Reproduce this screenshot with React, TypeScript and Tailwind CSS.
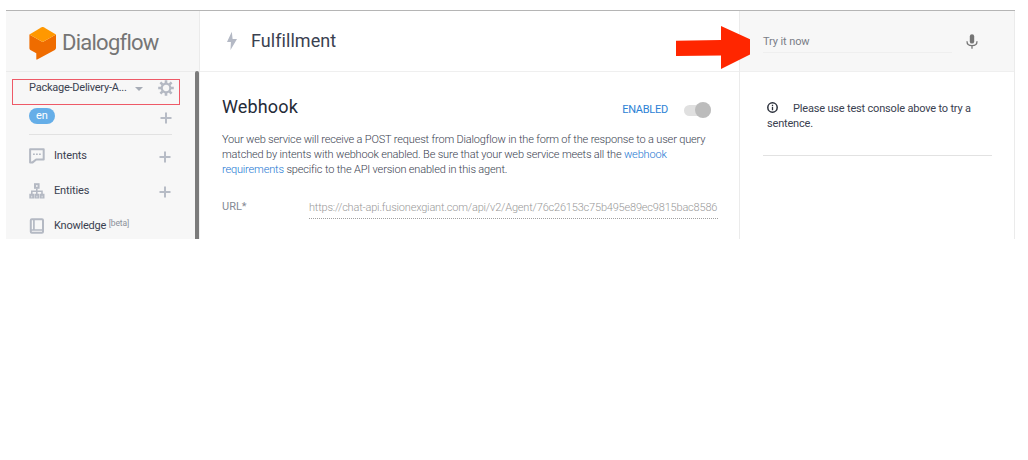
import type { ReactNode } from "react";

function Logo() {
  return (
    <svg width="28" height="36" viewBox="0 0 28 36" className="relative left-px top-px shrink-0">
      <path d="M0.4 8.4V22.2c0 .8.4 1.3 1 1.7l5.9 3.3v5.9c0 .6.4.8.9.5L25.8 23.900c.8-.5 1.200-1 1.200-1.800V8.400L13.700 15.900z" fill="#ef6c00" />
      <path d="M0.400 8.400 12.600 1.300c.7-.4 1.400-.4 2.100 0L27 8.400l-13.300 7.600z" fill="#ff9800" />
    </svg>
  );
}

function Gear() {
  return (
    <svg width="16" height="16" viewBox="0 0 16 16" className="shrink-0" fill="none" stroke="#b4b9c3">
      <circle cx="8" cy="8" r="4.3" strokeWidth="2.2" />
      <path d="M8 .2v3M8 12.8v3M.2 8h3M12.800 8h3M2.400 2.400l2.200 2.200M11.400 11.400l2.200 2.200M13.600 2.400l-2.200 2.200M4.600 11.400l-2.200 2.200" strokeWidth="2.6" />
    </svg>
  );
}

function Plus() {
  return (
    <svg width="12" height="12" viewBox="0 0 12 12" className="shrink-0">
      <path d="M6 .5v11M.5 6h11" stroke="#b7bcc6" strokeWidth="2" />
    </svg>
  );
}

function IntentsIcon() {
  return (
    <svg width="16" height="16" viewBox="0 0 16 16" fill="none" stroke="#b4b9c3" strokeWidth="2" strokeLinejoin="round">
      <path d="M1.1 1.200h13.600v10.300H7.200l-3.600 2.900H1.100z" />
      <path d="M4 6.200h1.800M7 6.200h1.800M10 6.200h1.800" strokeWidth="1.600" />
    </svg>
  );
}

function EntitiesIcon() {
  return (
    <svg width="16" height="16" viewBox="0 0 16 16" fill="none" stroke="#b4b9c3">
      <rect x="6" y="1.200" width="3.600" height="3.600" strokeWidth="2" />
      <path d="M7.800 5.500v5.500M2.800 11V8.300h10.200V11" strokeWidth="1.600" />
      <path d="M.3 10.700h4.800v4.700H.3zM5.500 10.700h4.700v4.700H5.500zM10.700 10.700h4.800v4.700h-4.800z" fill="#b4b9c3" stroke="none" />
      <path d="M2.200 13.600h1M7.400 13.600h1M12.600 13.600h1" stroke="#e2e4e8" strokeWidth="1.600" />
    </svg>
  );
}

function BookIcon() {
  return (
    <svg width="16" height="16" viewBox="0 0 16 16" fill="none" stroke="#b4b9c3">
      <rect x="1.800" y="1.200" width="12.200" height="13.600" rx="1" strokeWidth="2" />
      <path d="M4.900 1v10.500M2 12h12" strokeWidth="1.700" />
    </svg>
  );
}

function NavRow({ icon, children, add }: { icon: ReactNode; children: ReactNode; add?: boolean }) {
  return (
    <div className="flex h-[35px] items-center pl-[23px] pr-[24px]">
      {icon}
      <span className="ml-[9px] flex-1 text-[11px] leading-4 tracking-[-0.15px] text-[#3a4150]">{children}</span>
      {add && <span className="mt-[2px]"><Plus /></span>}
    </div>
  );
}

export default function App() {
  return (
    <div className="h-[460px] w-[1028px] overflow-hidden bg-white pl-[6px] pt-[10px] font-['Roboto',sans-serif] text-[#3a4150]">
      <div className="relative flex h-[229px] w-[1009px] border-t border-[#b5b5b5]">
        <aside className="flex w-[194px] shrink-0 flex-col bg-[#f7f7f7]">
          <div className="flex h-[61px] items-center border-b border-r border-[#ebebeb] pl-[22px] pt-[3px]">
            <Logo />
            <span className="ml-[6px] text-[22px] leading-6 tracking-[-0.75px] text-[#757575]">Dialogflow</span>
          </div>
          <div className="flex h-[167px]">
            <div className="w-[189px]">
              <div className="flex h-[32px] items-center pl-[23px]">
                <span className="w-[106px] whitespace-nowrap text-[11px] leading-4 tracking-[-0.24px]">Package-Delivery-A...</span>
                <span className="mt-[2px] h-0 w-0 border-x-4 border-t-4 border-x-transparent border-t-[#a7acb6]" />
                <span className="ml-[15px]"><Gear /></span>
              </div>
              <div className="flex h-[23px] items-center pl-[23px] pr-[17px]">
                <span className="h-4 w-[26px] rounded-full bg-[#65aee8] text-center text-[11px] leading-4 text-white">en</span>
                <span className="ml-[105px] mt-[4px]"><Plus /></span>
              </div>
              <div className="mb-[3px] ml-[23px] mt-[7px] h-px w-[143px] bg-[#e2e2e2]" />
              <NavRow icon={<IntentsIcon />} add>Intents</NavRow>
              <NavRow icon={<EntitiesIcon />} add>Entities</NavRow>
              <NavRow icon={<BookIcon />}>
                <span className="tracking-[-0.22px]">Knowledge</span> <span className="relative -top-[3px] text-[8.5px] text-[#8b909a]">[beta]</span>
              </NavRow>
            </div>
            <div className="-mt-px w-1 rounded-t-sm bg-[#7b7b7b]" />
            <div className="w-px bg-[#f0f0f0]" />
          </div>
        </aside>

        <main className="w-[539px] shrink-0">
          <header className="flex h-[61px] items-center border-b border-[#efefef] pl-[26px]">
            <svg width="12" height="20" viewBox="0 0 12 20">
              <path d="M5.800.8 1 11.100h3.900L4.500 19 11 7.900H6.600z" fill="#b4b9c5" />
            </svg>
            <h1 className="ml-[13px] text-[18px] leading-6 tracking-[0.06px]">Fulfillment</h1>
          </header>
          <div className="pl-[22px] pr-[21px] pt-[23px]">
            <div className="flex h-6 items-center">
              <h2 className="flex-1 text-[18px] leading-6 tracking-[0.15px] text-[#252b38]">Webhook</h2>
              <span className="mt-[5px] text-[11px] leading-4 tracking-[-0.25px] text-[#2d82d5]">ENABLED</span>
              <span className="ml-4 mr-[7px] mt-[6px] flex h-[11px] w-[27px] items-center justify-end rounded-full bg-[#e0e0e0]">
                <span className="h-4 w-4 shrink-0 rounded-full bg-[#bcbcbc]" />
              </span>
            </div>
            <p className="mt-[13px] whitespace-nowrap text-[11px] font-light leading-[15px] tracking-[-0.165px]">
              Your web service will receive a POST request from Dialogflow in the form of the response to a user query
              <br />
              matched by intents with webhook enabled. Be sure that your web service meets all the <span className="text-[#1976d2]">webhook</span>
              <br />
              <span className="text-[#1976d2]">requirements</span> specific to the API version enabled in this agent.
            </p>
            <div className="mt-[22px] flex">
              <span className="w-[87px] text-[11px] leading-4 text-[#858a94]">URL*</span>
              <span className="h-[20px] w-[409px] shrink-0 whitespace-nowrap border-b border-dotted border-[#a0a0a0] pt-px text-[11px] font-light leading-4 tracking-[-0.19px] text-[#999999]">
                https://chat-api.fusionexgiant.com/api/v2/Agent/76c26153c75b495e89ec9815bac8586
              </span>
            </div>
          </div>
        </main>

        <section className="w-[276px] shrink-0 border-x border-[#ebebeb]">
          <div className="flex h-[61px] items-center border-b border-[#efefef] bg-[#f7f7f7] pl-[23px]">
            <span className="h-[23px] w-[189px] border-b border-[#efefef] pt-[4px] text-[11px] leading-4 tracking-[-0.1px] text-[#7a7e87]">Try it now</span>
            <svg width="12" height="16" viewBox="0 0 12 16" className="relative top-px ml-[14px]">
              <rect x="3.800" y=".2" width="4.400" height="9.400" rx="2.200" fill="#757575" />
              <path d="M1 7.200c0 2.800 2.200 4.500 5 4.500s5-1.700 5-4.500M6 11.700v3" fill="none" stroke="#757575" strokeWidth="1.300" />
            </svg>
          </div>
          <div className="ml-[23px] h-[84px] w-[229px] border-b border-[#e2e2e2] pl-1 pt-[29px] text-[11px] leading-[15px] tracking-[-0.18px]">
            <div className="flex items-center">
              <svg width="11" height="11" viewBox="0 0 11 11" fill="none" stroke="#2b303b" className="relative -top-px">
                <circle cx="5.500" cy="5.500" r="4.700" strokeWidth="1.500" />
                <path d="M5.500 4.700v3.500M5.500 2.700v1.200" strokeWidth="1.300" />
              </svg>
              <span className="ml-[15px] whitespace-nowrap">Please use test console above to try a</span>
            </div>
            <div>sentence.</div>
          </div>
        </section>

        <div className="absolute left-[6px] top-[68px] h-[26px] w-[168px] border border-[#ee5967]" />
        <svg className="absolute left-[670px] top-[14px]" width="76" height="46" viewBox="0 0 76 46">
          <path d="M0 15.800 45 15V1l29 13.200V29.500L45 44V30.400L0 31z" fill="#ff2600" />
        </svg>
      </div>
    </div>
  );
}
